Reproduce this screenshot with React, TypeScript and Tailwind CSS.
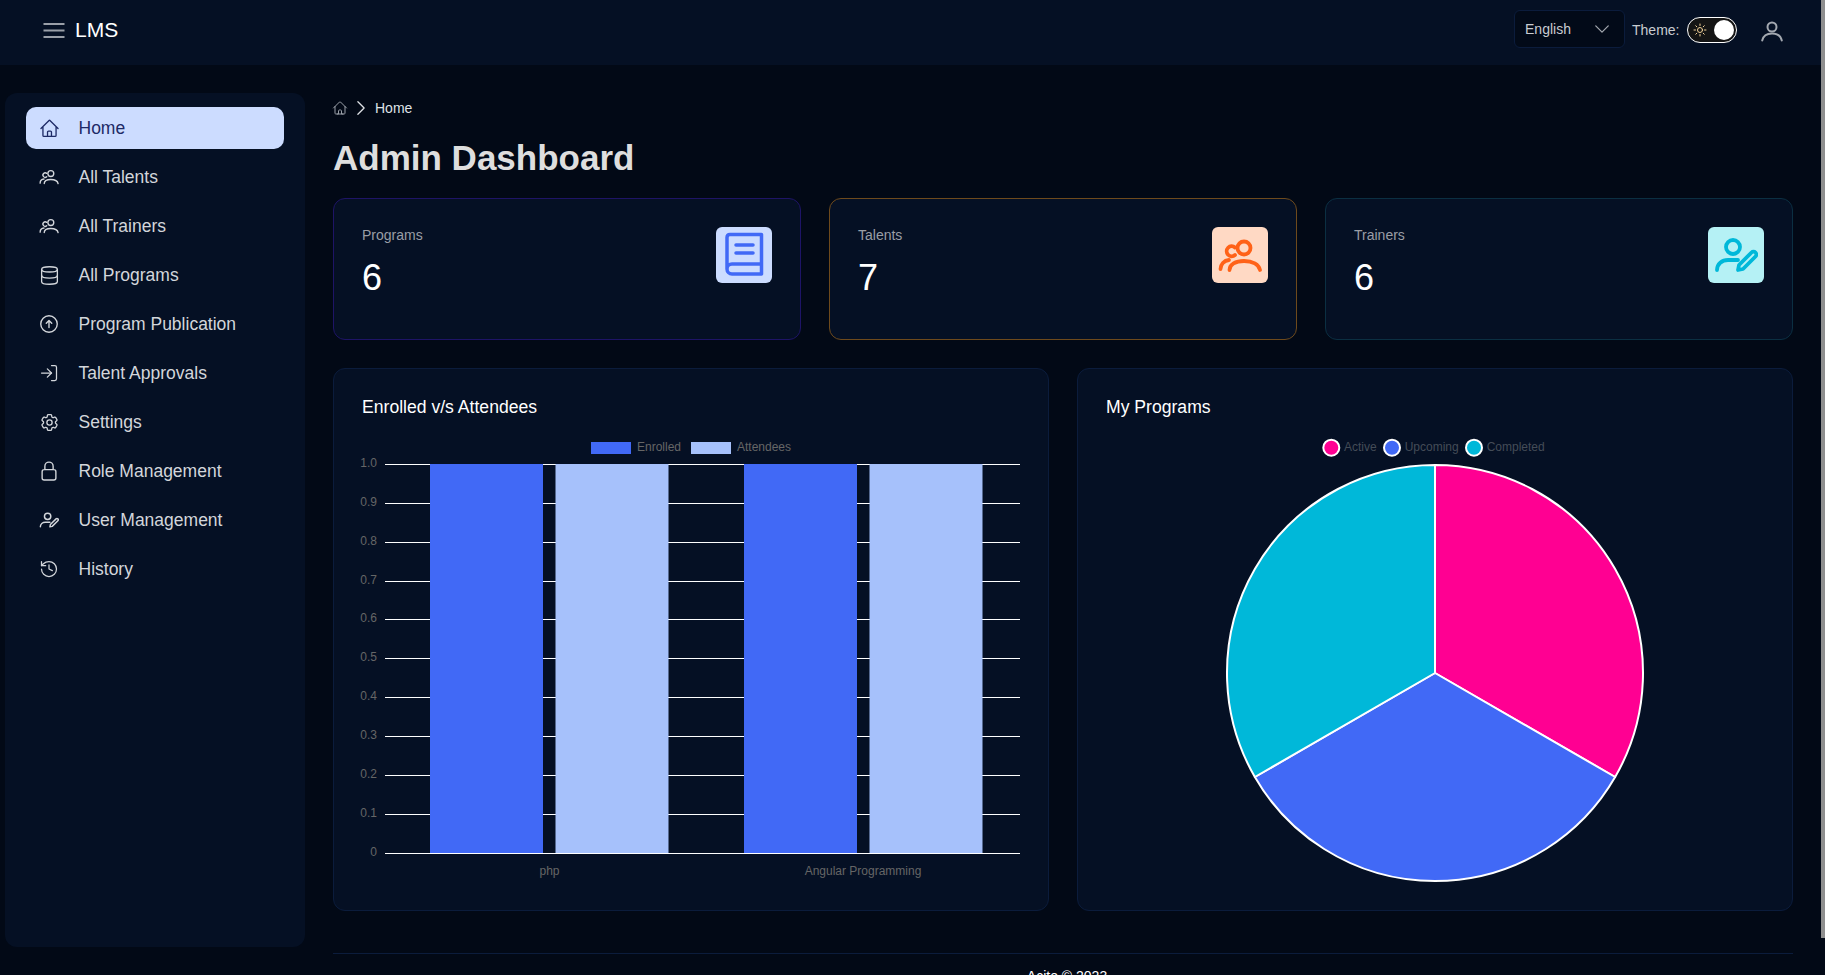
import { Database, History, LogIn } from 'lucide-react'
import { HiOutlineArrowUpCircle, HiOutlineChevronDown, HiOutlineChevronRight, HiOutlineCog6Tooth, HiOutlineHome, HiOutlineLockClosed, HiOutlineSun } from 'react-icons/hi2'
import type { ComponentType } from 'react'

type IconProps = { className?: string; strokeWidth?: number }

function UsersIcon({ className, strokeWidth = 3.8 }: IconProps) {
  return (
    <svg viewBox="6 11 44 33" fill="none" stroke="currentColor" strokeWidth={strokeWidth} strokeLinecap="round" className={className}>
      <circle cx="32" cy="20" r="6.500" />
      <path d="M17.500 42c0-5.500 6-9 14.500-9s15 3.500 16 9" />
      <path d="M23 19.500a5 5 0 1 0 0 7.500" />
      <path d="M8.500 41c0-4.500 3.500-8.500 8.500-9" />
    </svg>
  )
}

function UserPenIcon({ className, strokeWidth = 3.8 }: IconProps) {
  return (
    <svg viewBox="6 10 44 34" fill="none" stroke="currentColor" strokeWidth={strokeWidth} strokeLinecap="round" strokeLinejoin="round" className={className}>
      <circle cx="25" cy="19" r="7" />
      <path d="M9 42c0-6 5-10 11-10h10" />
      <path d="M30 42l1-5 12.500-12.500a2.800 2.800 0 0 1 4 4L35 41z" />
    </svg>
  )
}

function BookIcon({ className, strokeWidth = 3.5 }: IconProps) {
  return (
    <svg viewBox="0 0 56 56" fill="none" stroke="currentColor" strokeWidth={strokeWidth} strokeLinecap="round" strokeLinejoin="round" className={className}>
      <path d="M11 42V10.500q0-3 3-3h31.500V47H16a5 5 0 0 1 0-10h29.500" />
      <path d="M20 18h17M20 26h17" />
    </svg>
  )
}

function UserArcIcon({ className }: IconProps) {
  return (
    <svg viewBox="0 0 24 24" fill="none" stroke="currentColor" strokeWidth="2" strokeLinecap="round" className={className}>
      <circle cx="12" cy="8" r="4.500" />
      <path d="M2.200 21.500c1-4.500 5-7 9.800-7s8.800 2.500 9.800 7" />
    </svg>
  )
}

function NavUsers({ className }: IconProps) {
  return <UsersIcon className={className} strokeWidth={3} />
}

function NavUserPen({ className }: IconProps) {
  return <UserPenIcon className={className} strokeWidth={3.2} />
}

const navItems: { label: string; icon: ComponentType<{ className?: string; strokeWidth?: number }>; size: string }[] = [
  { label: 'Home', icon: HiOutlineHome, size: 'w-[21px] h-[21px]' },
  { label: 'All Talents', icon: NavUsers, size: 'w-[20px] h-[20px]' },
  { label: 'All Trainers', icon: NavUsers, size: 'w-[20px] h-[20px]' },
  { label: 'All Programs', icon: Database, size: 'w-[21px] h-[21px]' },
  { label: 'Program Publication', icon: HiOutlineArrowUpCircle, size: 'w-[22px] h-[22px]' },
  { label: 'Talent Approvals', icon: LogIn, size: 'w-[20px] h-[20px]' },
  { label: 'Settings', icon: HiOutlineCog6Tooth, size: 'w-[21px] h-[21px]' },
  { label: 'Role Management', icon: HiOutlineLockClosed, size: 'w-[22px] h-[22px]' },
  { label: 'User Management', icon: NavUserPen, size: 'w-[20px] h-[20px]' },
  { label: 'History', icon: History, size: 'w-[20px] h-[20px]' },
]

const stats = [
  { label: 'Programs', value: 6, icon: BookIcon, size: 'w-[56px] h-[56px]', border: 'border-[#1e1466]', tile: 'bg-[#ccdcff]', color: 'text-[#4169f6]' },
  { label: 'Talents', value: 7, icon: UsersIcon, size: 'w-[44px] h-[33px]', border: 'border-[#6e4a1c]', tile: 'bg-[#ffd9c4]', color: 'text-[#ff6218]' },
  { label: 'Trainers', value: 6, icon: UserPenIcon, size: 'w-[44px] h-[34px]', border: 'border-[#0b2f42]', tile: 'bg-[#b5f1f5]', color: 'text-[#00b8d9]' },
]

const ticks = ['1.0', '0.9', '0.8', '0.7', '0.6', '0.5', '0.4', '0.3', '0.2', '0.1', '0']

function BarChart() {
  return (
    <svg width="714" height="530" className="block mt-[1px]" fontFamily="Liberation Sans, Arial, sans-serif">
      <rect x="257" y="72" width="40" height="12" fill="#4169f6" />
      <text x="303" y="81" fontSize="12" fill="#666">Enrolled</text>
      <rect x="357" y="72" width="40" height="12" fill="#a6c1fb" />
      <text x="403" y="81" fontSize="12" fill="#666">Attendees</text>
      {ticks.map((t, i) => {
        const y = Math.floor(94.3 + i * 38.9) + 0.5
        return (
          <g key={t}>
            <line x1="51" x2="686" y1={y} y2={y} stroke="#fff" strokeWidth="1" />
            <text x="43" y={y + 2} fontSize="12" fill="#666" textAnchor="end">{t}</text>
          </g>
        )
      })}
      {[96, 410].map((x) => (
        <g key={x}>
          <rect x={x} y="94" width="113" height="389.500" fill="#4169f6" />
          <rect x={x + 125.5} y="94" width="113" height="389.500" fill="#a6c1fb" />
        </g>
      ))}
      <line x1="51" x2="686" y1="483.500" y2="483.500" stroke="#fff" strokeWidth="1.200" />
      <text x="215.500" y="505" fontSize="12" fill="#666" textAnchor="middle">php</text>
      <text x="529" y="505" fontSize="12" fill="#666" textAnchor="middle">Angular Programming</text>
    </svg>
  )
}

function PieChart() {
  const cx = 357
  const cy = 303
  const r = 208
  const sx = cx + r * Math.sin((2 * Math.PI) / 3)
  const sy = cy - r * Math.cos((2 * Math.PI) / 3)
  const tx = cx + r * Math.sin((4 * Math.PI) / 3)
  const ty = cy - r * Math.cos((4 * Math.PI) / 3)
  return (
    <svg width="714" height="530" className="block mt-[1px]" fontFamily="Liberation Sans, Arial, sans-serif">
      <circle cx="253.300" cy="77.700" r="8" fill="#ff0092" stroke="#fff" strokeWidth="2" />
      <text x="266" y="81" fontSize="12" fill="#444c57">Active</text>
      <circle cx="314" cy="77.700" r="8" fill="#4169f6" stroke="#fff" strokeWidth="2" />
      <text x="326.700" y="81" fontSize="12" fill="#444c57">Upcoming</text>
      <circle cx="396" cy="77.700" r="8" fill="#00b8d9" stroke="#fff" strokeWidth="2" />
      <text x="408.700" y="81" fontSize="12" fill="#444c57">Completed</text>
      <g stroke="#fff" strokeWidth="2" strokeLinejoin="round">
        <path d={`M${cx} ${cy}L${cx} ${cy - r}A${r} ${r} 0 0 1 ${sx} ${sy}Z`} fill="#ff0092" />
        <path d={`M${cx} ${cy}L${sx} ${sy}A${r} ${r} 0 0 1 ${tx} ${ty}Z`} fill="#4169f6" />
        <path d={`M${cx} ${cy}L${tx} ${ty}A${r} ${r} 0 0 1 ${cx} ${cy - r}Z`} fill="#00b8d9" />
      </g>
    </svg>
  )
}

export default function App() {
  return (
    <div className="relative h-screen overflow-hidden flex flex-col bg-[#020916] text-white font-['Liberation_Sans',Arial,sans-serif] pr-1">
      {/* scrollbar thumb */}
      <div className="absolute right-0 top-0 w-1 h-[938px] bg-[#8f8f8f]" />

      <header className="h-[65px] shrink-0 bg-[#051024] flex items-center pl-[43px] pr-[37px] pb-[5px]">
        <svg viewBox="0 0 22 15" className="w-[22px] h-[15px] text-[#9a9fa8]" fill="none" stroke="currentColor" strokeWidth="2">
          <path d="M0.500 1h21M0.500 7.500h21M0.500 14h21" />
        </svg>
        <span className="ml-[10px] text-[21px]">LMS</span>
        <div className="ml-auto flex items-center">
          <div className="mb-[3px] w-[111px] h-[38px] rounded-md bg-[#020a18] border border-[#0b1c3c] flex items-center justify-between pl-[10px] pr-[12px] text-sm text-[#c9ccd1]">
            English
            <HiOutlineChevronDown className="w-[20px] h-[20px] text-[#a3a8b0]" />
          </div>
          <span className="ml-[7px] text-sm text-[#c9ccd1]">Theme:</span>
          <div className="ml-[7px] w-[50px] h-[26px] rounded-full bg-[#141414] border-[1.500px] border-white flex items-center justify-between pl-[4px] pr-[2px]">
            <HiOutlineSun className="w-[16px] h-[16px] text-[#f3d39a]" />
            <span className="w-[20px] h-[20px] rounded-full bg-white" />
          </div>
          <UserArcIcon className="ml-[23.500px] mt-[2px] w-[24px] h-[24px] text-[#a3a8b0]" />
        </div>
      </header>

      <div className="flex-1 flex min-h-0">
        <aside className="w-[300px] shrink-0 ml-[5px] mt-[28px] mb-[28px] bg-[#051024] rounded-xl pt-[14px] px-[21px]">
          <nav className="flex flex-col gap-[7px]">
            {navItems.map(({ label, icon: Icon, size }, i) => (
              <a key={label} className={`h-[42px] flex items-center pl-[13px] rounded-[10px] text-[17.500px] ${i === 0 ? 'bg-[#ccdcff] text-[#1e2a66]' : 'text-[#d3d6db]'}`}>
                <span className="w-[20px] shrink-0 flex justify-center">
                  <Icon className={`${size} shrink-0`} strokeWidth={1.5} />
                </span>
                <span className="ml-[19.500px]">{label}</span>
              </a>
            ))}
          </nav>
        </aside>

        <main className="flex-1 min-w-0 pl-[28px] pr-[28px] pt-[33px]">
          <div className="flex items-center h-[20px] text-sm text-[#dfe2e6]">
            <HiOutlineHome className="-ml-[1px] w-[16px] h-[16px] text-[#9aa0a8]" />
            <HiOutlineChevronRight className="ml-[3px] w-[20px] h-[20px]" />
            <span className="ml-[4px]">Home</span>
          </div>
          <h1 className="mt-[20px] text-[35px] leading-[40px] font-bold text-[#dedede]">Admin Dashboard</h1>

          <div className="mt-[20px] grid grid-cols-3 gap-[28px]">
            {stats.map(({ label, value, icon: Icon, size, border, tile, color }) => (
              <div key={label} className={`h-[142px] rounded-xl bg-[#051024] border ${border} pt-[28px] pl-[28px] pr-[28px] flex justify-between`}>
                <div>
                  <div className="-mt-[2px] text-sm text-[#9a9ea6]">{label}</div>
                  <div className="mt-[13px] text-[36px] leading-[40px]">{value}</div>
                </div>
                <div className={`w-[56px] h-[56px] rounded-md flex items-center justify-center ${tile} ${color}`}>
                  <Icon className={size} />
                </div>
              </div>
            ))}
          </div>

          <div className="mt-[28px] grid grid-cols-2 gap-[28px]">
            <div className="relative h-[543px] rounded-xl bg-[#051024] border border-[#0b1c3c]">
              <h2 className="absolute left-[28px] top-[25px] text-[17.600px]">Enrolled v/s Attendees</h2>
              <BarChart />
            </div>
            <div className="relative h-[543px] rounded-xl bg-[#051024] border border-[#0b1c3c]">
              <h2 className="absolute left-[28px] top-[25px] text-[17.600px]">My Programs</h2>
              <PieChart />
            </div>
          </div>

          <footer className="mt-[42px] border-t border-[#0b1c3c] pt-[12px] pl-[8px] text-center text-sm">Acito © 2023</footer>
        </main>
      </div>
    </div>
  )
}
